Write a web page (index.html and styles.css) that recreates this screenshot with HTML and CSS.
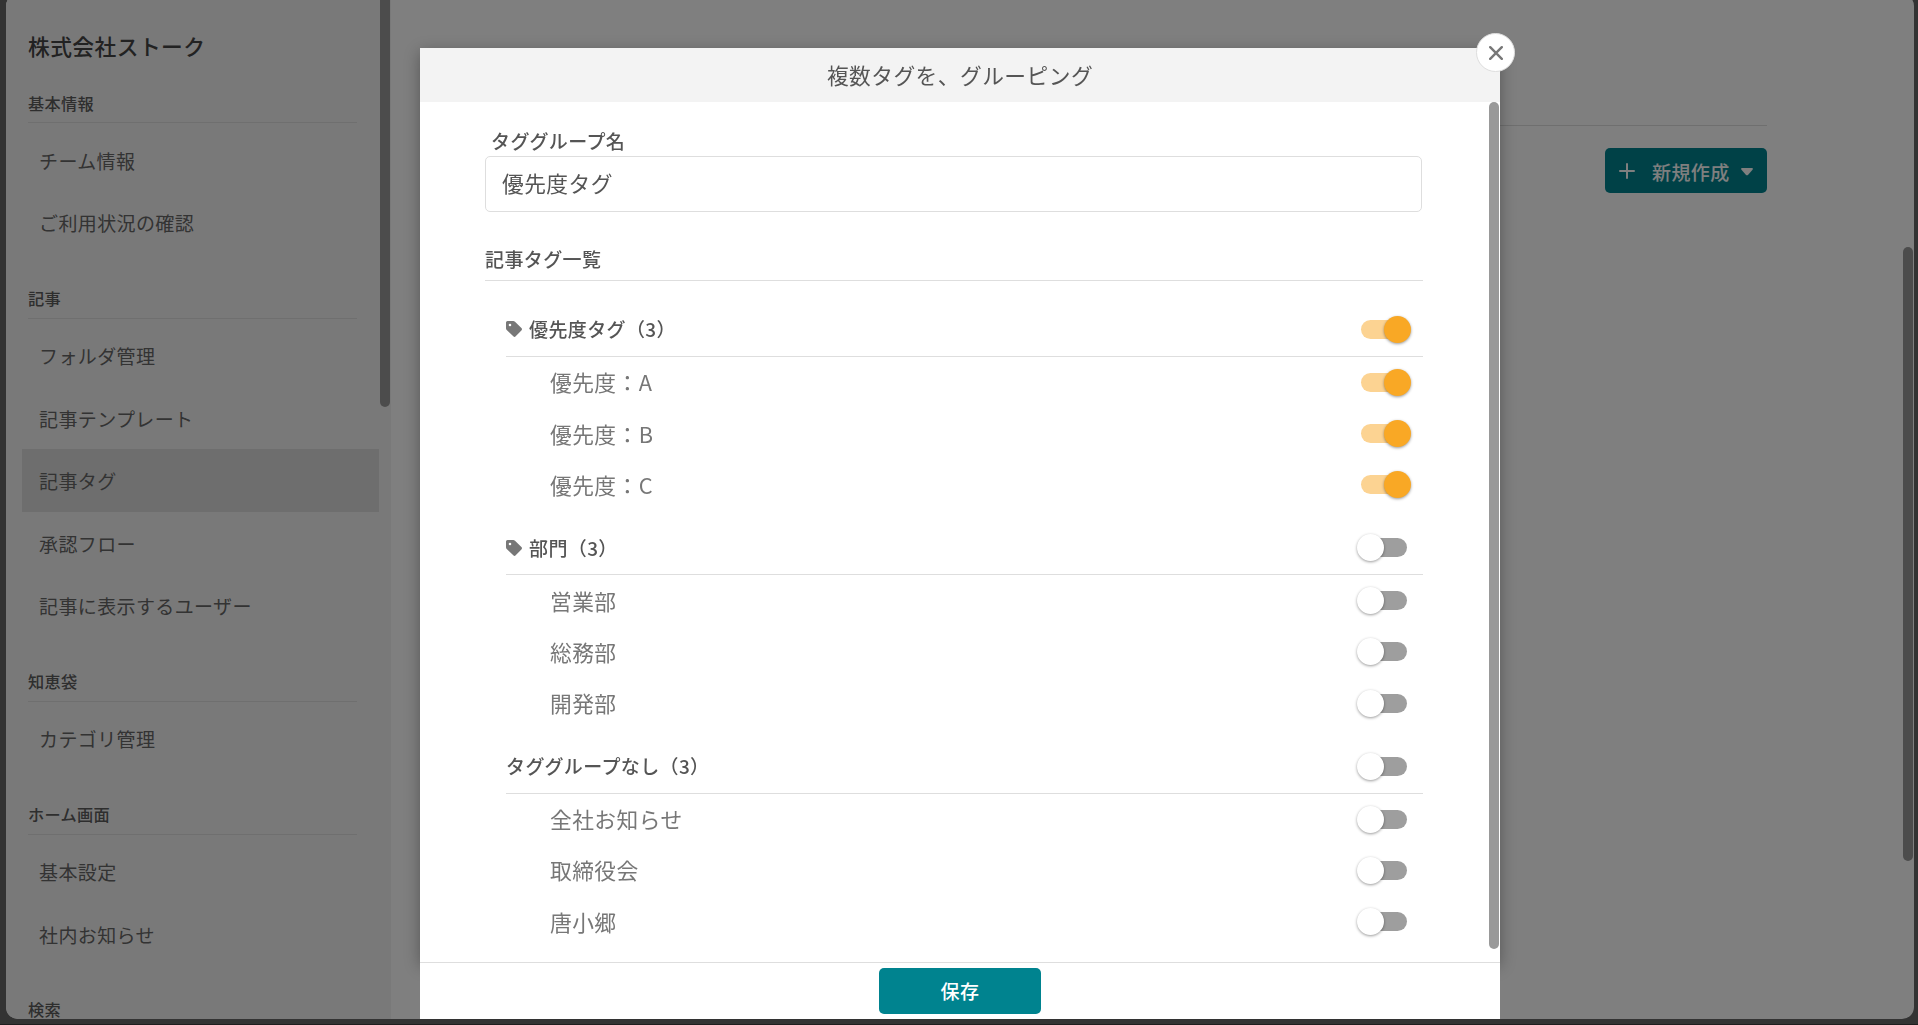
FILE: index.html
```html
<!DOCTYPE html>
<html lang="ja">
<head>
    <meta charset="UTF-8">
    <meta name="viewport" content="width=device-width, initial-scale=1.0">
    <title>記事タグ</title>
    <link rel="stylesheet" href="styles.css">
</head>
<body>
    <div class="window">
        <aside class="sidebar">
            <h1 class="company">株式会社ストーク</h1>
            <h2 class="menu-title first">基本情報</h2>
            <ul class="menu">
                <li>チーム情報</li>
                <li>ご利用状況の確認</li>
            </ul>
            <h2 class="menu-title">記事</h2>
            <ul class="menu">
                <li>フォルダ管理</li>
                <li>記事テンプレート</li>
                <li class="active">記事タグ</li>
                <li>承認フロー</li>
                <li>記事に表示するユーザー</li>
            </ul>
            <h2 class="menu-title">知恵袋</h2>
            <ul class="menu">
                <li>カテゴリ管理</li>
            </ul>
            <h2 class="menu-title">ホーム画面</h2>
            <ul class="menu">
                <li>基本設定</li>
                <li>社内お知らせ</li>
            </ul>
            <h2 class="menu-title">検索</h2>
            <div class="scrollbar sidebar-scrollbar"></div>
        </aside>
        <main class="main">
            <div class="toolbar">
                <button type="button" class="btn btn-new">
                    <svg class="icon-plus" width="16" height="16" viewBox="0 0 16 16"><path d="M8 1v14M1 8h14"/></svg>
                    <span>新規作成</span>
                    <svg class="icon-caret" width="12" height="8" viewBox="0 0 12 8"><path d="M1 0h10q1.500.5.5 1.700L7.200 6.700q-1.200 1.100-2.400 0L.5 1.700Q-.5.5 1 0z"/></svg>
                </button>
            </div>
        </main>
        <div class="scrollbar main-scrollbar"></div>
    </div>

    <div class="backdrop"></div>

    <div class="modal">
        <div class="modal-content">
            <div class="modal-header">複数タグを、グルーピング</div>
            <div class="modal-body">
                <label class="field-label" for="groupName">タググループ名</label>
                <input class="field-input" type="text" id="groupName" value="優先度タグ">
                <h3 class="list-title">記事タグ一覧</h3>

                <div class="tag-group">
                    <div class="group-head">
                        <svg class="icon-tag" width="16" height="16" viewBox="0 0 16 16"><path fill-rule="evenodd" d="M0 1.500Q0 0 1.500 0h5.700q1 0 1.800.7l6.400 6.400q1.200 1.200 0 2.400l-5.700 5.800q-1.200 1.200-2.400 0L.7 9Q0 8.200 0 7.200zM4 2.700a1.300 1.300 0 1 0 0 2.600 1.300 1.300 0 0 0 0-2.600z"/></svg>
                        <span>優先度タグ（3）</span><i class="toggle on"></i>
                    </div>
                    <div class="tag-row"><span>優先度：A</span><i class="toggle on"></i></div>
                    <div class="tag-row"><span>優先度：B</span><i class="toggle on"></i></div>
                    <div class="tag-row"><span>優先度：C</span><i class="toggle on"></i></div>
                </div>

                <div class="tag-group">
                    <div class="group-head">
                        <svg class="icon-tag" width="16" height="16" viewBox="0 0 16 16"><path fill-rule="evenodd" d="M0 1.500Q0 0 1.500 0h5.700q1 0 1.800.7l6.400 6.400q1.200 1.200 0 2.400l-5.700 5.800q-1.200 1.200-2.400 0L.7 9Q0 8.200 0 7.200zM4 2.700a1.300 1.300 0 1 0 0 2.600 1.300 1.300 0 0 0 0-2.600z"/></svg>
                        <span>部門（3）</span><i class="toggle"></i>
                    </div>
                    <div class="tag-row"><span>営業部</span><i class="toggle"></i></div>
                    <div class="tag-row"><span>総務部</span><i class="toggle"></i></div>
                    <div class="tag-row"><span>開発部</span><i class="toggle"></i></div>
                </div>

                <div class="tag-group">
                    <div class="group-head"><span>タググループなし（3）</span><i class="toggle"></i></div>
                    <div class="tag-row"><span>全社お知らせ</span><i class="toggle"></i></div>
                    <div class="tag-row"><span>取締役会</span><i class="toggle"></i></div>
                    <div class="tag-row"><span>唐小郷</span><i class="toggle"></i></div>
                </div>
            </div>
        </div>
        <div class="modal-footer">
            <button type="button" class="btn btn-save">保存</button>
        </div>
        <div class="scrollbar modal-scrollbar"></div>
        <button type="button" class="close" aria-label="閉じる">
            <svg width="14" height="14" viewBox="0 0 14 14"><path d="M1.200 1.200l11.600 11.600M12.800 1.200L1.200 12.800"/></svg>
        </button>
    </div>
</body>
</html>
```

FILE: styles.css
```css
* {
    box-sizing: border-box;
}
body {
    margin: 0;
    height: 1025px;
    overflow: hidden;
    background-color: #666;
    border-bottom: 1px solid #3c3c3c;
    font-family: "Noto Sans CJK JP", sans-serif;
    letter-spacing: 0.02em;
    color: #555;
}
h1, h2, h3, ul {
    margin: 0;
    padding: 0;
    list-style: none;
}
/* Spacing is inherited in px, so set it again where the font size changes */
h1, h2, h3, li, label, button, input, .modal-header, .group-head, .tag-row {
    letter-spacing: 0.02em;
}
button, input {
    font-family: inherit;
}

/* App window */
.window {
    position: relative;
    display: flex;
    margin: -6px 4px 0 6px;
    height: 1025px;
    overflow: hidden;
    border-radius: 12px;
    background-color: #fff;
}
.scrollbar {
    position: absolute;
    width: 10px;
    border-radius: 5px;
    background-color: #999;
}

/* Sidebar */
.sidebar {
    position: relative;
    flex: none;
    width: 385px;
    padding: 34px 12px 0 16px;
    background-color: #f3f3f3;
}
.company {
    height: 37px;
    line-height: 36px;
    font-size: 21.75px;
    font-weight: 500;
    color: #444;
}
.company, .menu-title {
    margin: 0 22px 0 6px;
}
.menu-title {
    height: 65px;
    padding-top: 32px;
    border-bottom: 1px solid #dedede;
    line-height: 24px;
    font-size: 16.2px;
    font-weight: 500;
    color: #5c5c5c;
}
.menu-title.first {
    height: 58px;
    padding-top: 26px;
}
.menu {
    padding-top: 5.5px;
}
.menu li {
    height: 62.5px;
    padding-left: 17px;
    line-height: 63.5px;
    font-size: 19px;
    color: #666;
}
.menu li.active {
    background-color: #dcdcdc;
}
.sidebar-scrollbar {
    top: 0;
    left: 374px;
    height: 413px;
}

/* Main area */
.main {
    flex: 1;
    padding: 131px 147px 0 60px;
}
.toolbar {
    display: flex;
    justify-content: flex-end;
    padding-top: 22px;
    border-top: 1px solid #dedede;
}
.main-scrollbar {
    top: 253px;
    right: 1px;
    height: 614px;
}
.btn {
    width: 162px;
    border: none;
    border-radius: 5px;
    background-color: #00838f;
    color: #fff;
    font-size: 19px;
    font-weight: 500;
}
.btn-new {
    display: flex;
    align-items: center;
    height: 45px;
    padding: 0 14px;
}
.btn-new span {
    margin: 1px 11px 0 17px;
    white-space: nowrap;
}
.icon-plus {
    flex: none;
    fill: none;
    stroke: #fff;
    stroke-width: 2;
    stroke-linecap: round;
}
.icon-caret {
    flex: none;
    margin-top: 2px;
    fill: #fff;
}

/* Modal */
.backdrop {
    position: fixed;
    inset: 0;
    background-color: rgba(0, 0, 0, 0.5);
}
.modal {
    position: absolute;
    top: 48px;
    left: 420px;
    width: 1080px;
    height: 971px;
}
.modal-content {
    height: 914px;
    background-color: #fff;
    box-shadow: 0 4px 15px rgba(0, 0, 0, 0.32);
}
.modal-header {
    height: 54px;
    background-color: #f3f3f3;
    text-align: center;
    line-height: 53px;
    font-size: 21.75px;
}
.modal-body {
    padding: 26px 77px 0 65px;
}
.field-label {
    display: block;
    padding-left: 6px;
    height: 28px;
    line-height: 25px;
    font-size: 19px;
    font-weight: 500;
}
.field-input {
    display: block;
    width: 937px;
    height: 56px;
    padding: 0 16px 3px;
    border: 1px solid #dedede;
    border-radius: 5px;
    font-size: 21.75px;
    color: #555;
    outline: none;
}
.list-title {
    height: 69px;
    padding-top: 33px;
    border-bottom: 1px solid #dedede;
    line-height: 27px;
    font-size: 19px;
    font-weight: 500;
}
.tag-group {
    padding: 21.8px 0 0 21px;
    height: 218.4px;
}
.group-head {
    display: flex;
    align-items: center;
    height: 54px;
    padding-right: 16px;
    border-bottom: 1px solid #dedede;
    font-size: 19px;
    font-weight: 500;
}
.tag-row {
    display: flex;
    align-items: center;
    height: 51.2px;
    padding: 0 16px 0 44px;
    font-size: 21.75px;
    color: #777;
}
.group-head span, .tag-row span {
    padding-bottom: 1px;
}
.icon-tag {
    margin-right: 7px;
    fill: #777;
}
.toggle {
    position: relative;
    width: 46px;
    height: 19px;
    margin-left: auto;
    border-radius: 10px;
    background-color: #9e9e9e;
}
.toggle::after {
    content: "";
    position: absolute;
    top: -4px;
    left: -4px;
    width: 27px;
    height: 27px;
    border-radius: 50%;
    background-color: #fff;
    box-shadow: 0 1px 3px rgba(0, 0, 0, 0.4);
}
.toggle.on {
    background-color: #fcd392;
}
.toggle.on::after {
    left: 23px;
    background-color: #f9a825;
}
.modal-footer {
    position: relative;
    display: flex;
    justify-content: center;
    height: 57px;
    padding: 5px 0;
    border-top: 1px solid #dedede;
    background-color: #fff;
}
.btn-save {
    height: 46px;
    padding-bottom: 3px;
}
.modal-scrollbar {
    top: 54px;
    right: 1px;
    height: 847px;
}
.close {
    position: absolute;
    top: -15px;
    right: -15px;
    display: flex;
    align-items: center;
    justify-content: center;
    width: 39px;
    height: 39px;
    padding: 0;
    border: 1px solid #dedede;
    border-radius: 50%;
    background-color: #fff;
}
.close svg {
    fill: none;
    stroke: #777;
    stroke-width: 2.4;
    stroke-linecap: round;
}
```
